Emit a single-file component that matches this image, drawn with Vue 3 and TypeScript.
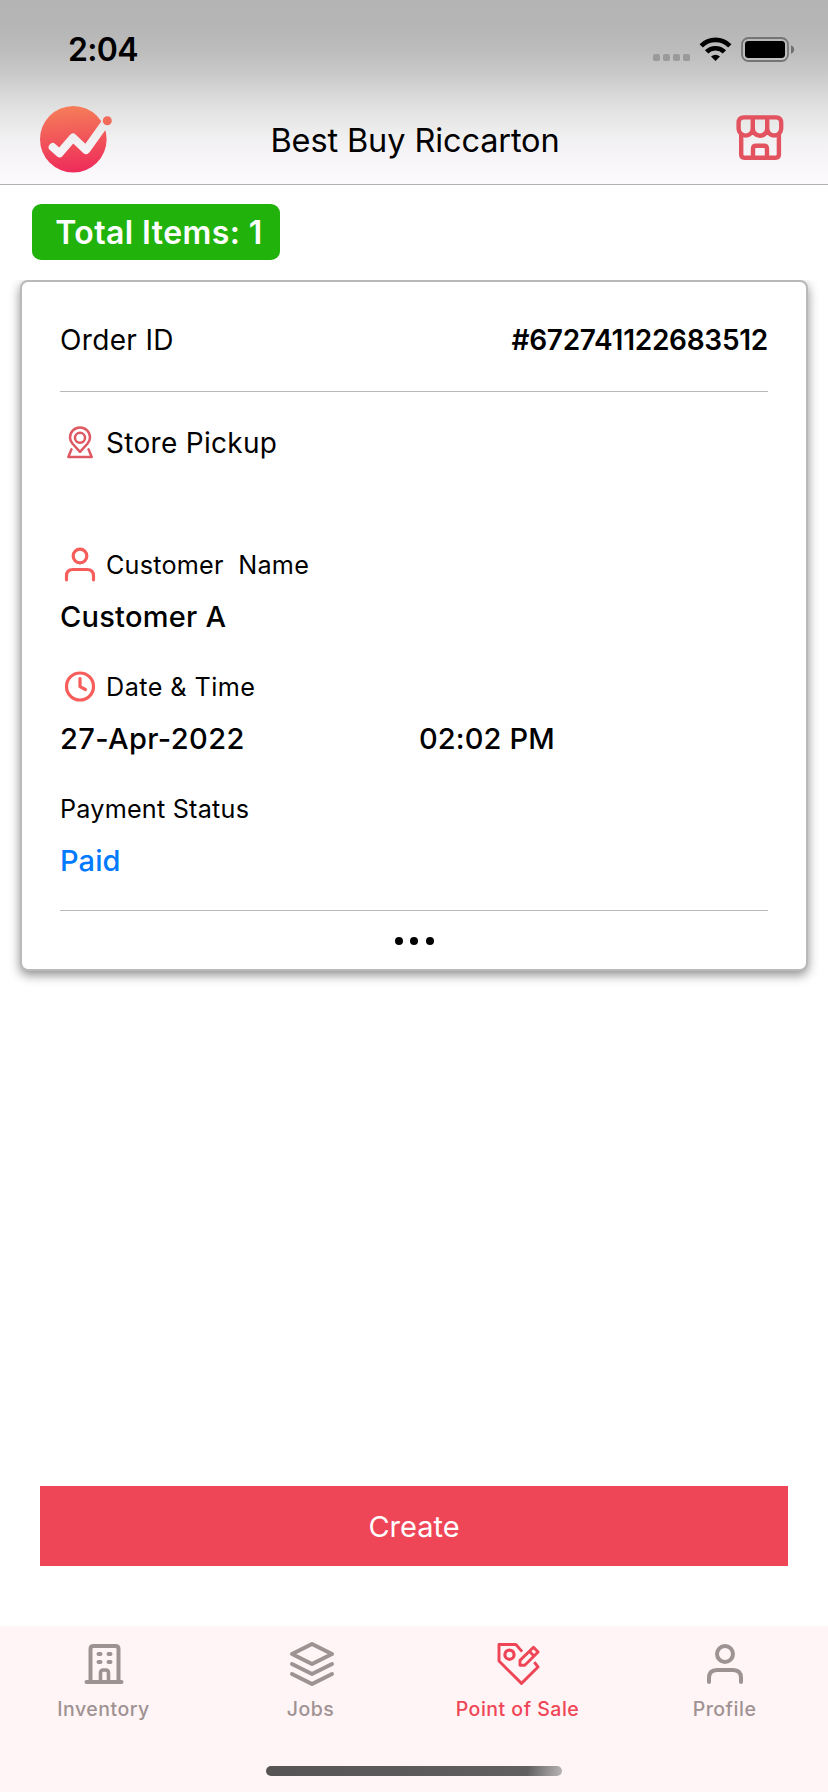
<script setup lang="ts">
interface Tab {
  key: 'inventory' | 'jobs' | 'pos' | 'profile'
  label: string
  active: boolean
}

const order = {
  id: '#672741122683512',
  method: 'Store Pickup',
  customer: 'Customer A',
  date: '27-Apr-2022',
  time: '02:02 PM',
  status: 'Paid',
}

const tabs: Tab[] = [
  { key: 'inventory', label: 'Inventory', active: false },
  { key: 'jobs', label: 'Jobs', active: false },
  { key: 'pos', label: 'Point of Sale', active: true },
  { key: 'profile', label: 'Profile', active: false },
]
</script>

<template>
  <div class="screen">
    <header class="header">
      <div class="status">
        <span class="clock">2:04</span>
        <svg class="status-icons" width="142" height="26" viewBox="653 36 142 26">
          <g fill="#9a9a9a">
            <rect x="653" y="54" width="7" height="7" rx="1.8" />
            <rect x="663" y="54" width="7" height="7" rx="1.8" />
            <rect x="673" y="54" width="7" height="7" rx="1.8" />
            <rect x="683" y="54" width="7" height="7" rx="1.8" />
          </g>
          <g fill="none" stroke="#000" stroke-width="4.6">
            <path d="M701.2 45.9 A20 20 0 0 1 729.8 45.9" />
            <path d="M706.6 51.9 A12.5 12.5 0 0 1 724.4 51.9" />
          </g>
          <path d="M715.5 61 L711 56.6 Q715.5 52.8 720 56.6 Z" />
          <rect x="742" y="38" width="46" height="23" rx="6.5" fill="none" stroke="#757575" stroke-width="1.8" />
          <rect x="745" y="41" width="40" height="17" rx="3.4" />
          <path d="M791 45.2 Q794.2 46.6 794.2 49.5 Q794.2 52.4 791 53.8 Z" fill="#707070" />
        </svg>
      </div>
      <div class="titlebar">
        <svg class="logo" width="74" height="70" viewBox="39 105 74 70">
          <defs>
            <linearGradient id="brand" gradientUnits="userSpaceOnUse" x1="70" y1="106" x2="75" y2="173">
              <stop offset="0" stop-color="#f57e59" />
              <stop offset="1" stop-color="#ee2a5a" />
            </linearGradient>
            <mask id="trend" maskUnits="userSpaceOnUse" x="39" y="105" width="74" height="70">
              <rect x="39" y="105" width="74" height="70" fill="#fff" />
              <path d="M52.8 147.2 L59.6 153.2 L73 137.6 L86 150 L106 122" fill="none" stroke="#000" stroke-width="8.2" stroke-linecap="round" stroke-linejoin="round" />
            </mask>
          </defs>
          <circle cx="73.3" cy="139.3" r="33.3" fill="url(#brand)" mask="url(#trend)" />
          <circle cx="107.3" cy="120.8" r="4.5" fill="#f26a58" />
        </svg>
        <h1 class="title">Best Buy Riccarton</h1>
        <svg class="store" width="50" height="48" viewBox="735 114 50 48" fill="none" stroke="#e2535f" stroke-width="4.4" stroke-linejoin="round">
          <path d="M738.6 128.500 V123 Q738.600 117.400 744 117.400 H776 Q781.200 117.400 781.200 123 V128.500 A7 7 0 0 1 767.200 128.500 V117.400 M767.200 128.500 A7.200 7.200 0 0 1 752.800 128.500 V117.400 M752.800 128.500 A7.100 7.100 0 0 1 738.600 128.500" />
          <path d="M741.200 134 V154.500 Q741.200 157.700 744.400 157.700 H775.600 Q778.900 157.700 778.900 154.500 V134" />
          <path d="M753 157.500 V149 Q753 145.800 756 145.800 H764 Q767 145.800 767 149 V157.500" />
        </svg>
      </div>
    </header>

    <div class="summary">
      <span class="badge">Total Items: 1</span>
    </div>

    <main class="orders">
      <article class="card">
        <div class="order-row">
          <span class="order-label">Order ID</span>
          <span class="order-id">{{ order.id }}</span>
        </div>

        <div class="method">
          <svg class="icon" width="40" height="40" viewBox="60 422.500 40 40" fill="none" stroke="#df5963" stroke-width="2.500" stroke-linejoin="round" stroke-linecap="round">
            <path d="M80 451.400 L72.400 443 Q70 440 70 437 A10 10 0 0 1 90 437 Q90 440 87.600 443 Z" />
            <circle cx="80" cy="437.300" r="5" />
            <path d="M71.500 448.800 L68.300 456.400 H91.700 L88.500 448.800" />
          </svg>
          <span class="method-label">{{ order.method }}</span>
        </div>

        <section class="field">
          <div class="label-row">
            <svg class="icon" width="40" height="40" viewBox="60 545 40 40" fill="none" stroke="#f65d5b" stroke-width="3.200" stroke-linecap="round">
              <circle cx="80" cy="556" r="6.800" />
              <path d="M66.500 579.800 V576 Q66.500 569.500 73 569.500 H87 Q93.500 569.500 93.500 576 V579.800" />
            </svg>
            <span class="label">Customer&nbsp; Name</span>
          </div>
          <div class="value customer">{{ order.customer }}</div>
        </section>

        <section class="field">
          <div class="label-row">
            <svg class="icon" width="40" height="40" viewBox="60 667 40 40" fill="none" stroke="#f65d5b" stroke-width="3.200" stroke-linecap="round" stroke-linejoin="round">
              <circle cx="80" cy="686.500" r="13.500" />
              <path d="M80 678.500 V686.700 L85.400 689.500" />
            </svg>
            <span class="label date-label">Date &amp; Time</span>
          </div>
          <div class="value split">
            <span class="date">{{ order.date }}</span>
            <span class="time">{{ order.time }}</span>
          </div>
        </section>

        <section class="field">
          <div class="label-row"><span class="label">Payment Status</span></div>
          <div class="value paid">{{ order.status }}</div>
        </section>

        <div class="more">
          <i></i><i></i><i></i>
        </div>
      </article>
    </main>

    <button class="create" type="button">Create</button>

    <nav class="tabs">
      <div v-for="tab in tabs" :key="tab.key" class="tab" :class="[tab.key, { active: tab.active }]">
        <svg v-if="tab.key === 'inventory'" class="tab-icon" width="48" height="48" viewBox="79.500 1640 48 48" fill="none" stroke="currentColor" stroke-width="4" stroke-linecap="round" stroke-linejoin="round">
          <path d="M86 1682 H121 M90 1681 V1649 Q90 1646 93 1646 H115 Q118 1646 118 1649 V1681" />
          <path d="M98 1654 H100 M108 1654 H110 M98 1662 H100 M108 1662 H110" />
          <path d="M100 1681 V1673 Q100 1670 103 1670 H105 Q108 1670 108 1673 V1681" stroke-width="3.600" />
        </svg>
        <svg v-else-if="tab.key === 'jobs'" class="tab-icon" width="48" height="48" viewBox="287 1640 48 48" fill="none" stroke="currentColor" stroke-width="4" stroke-linecap="round" stroke-linejoin="round">
          <path d="M312 1644 L332 1654 L312 1664 L292 1654 Z" />
          <path d="M292 1664 L312 1674 L332 1664" />
          <path d="M292 1674 L312 1684 L332 1674" />
        </svg>
        <svg v-else-if="tab.key === 'pos'" class="tab-icon" width="48" height="48" viewBox="493.500 1640 48 48" fill="none" stroke="currentColor" stroke-width="2.900" stroke-linejoin="round">
          <path d="M521.600 1651.600 L515.400 1644.500 H498.500 V1661 L521 1683.400 L537.500 1667 L533.800 1662.200" />
          <circle cx="509" cy="1654.700" r="4.600" stroke-width="3.200" />
          <path d="M519.500 1665.300 V1660.400 L533 1647.300 L537.600 1652 L524.300 1665.300 Z M528.800 1651.300 L533.600 1656" />
        </svg>
        <svg v-else class="tab-icon" width="48" height="48" viewBox="700 1640 48 48" fill="none" stroke="currentColor" stroke-width="4" stroke-linecap="round">
          <circle cx="724" cy="1654" r="8" />
          <path d="M708 1682 V1678 Q708 1670 716 1670 H732 Q740 1670 740 1678 V1682" />
        </svg>
        <span class="tab-label">{{ tab.label }}</span>
      </div>
      <div class="home"></div>
    </nav>
  </div>
</template>

<style>
html,
body {
  margin: 0;
  background: #fff;
}
</style>

<style scoped>
.screen {
  box-sizing: border-box;
  display: flex;
  flex-direction: column;
  width: 828px;
  height: 1792px;
  overflow: hidden;
  background: #fff;
  color: #000;
  font-family: Inter, "Liberation Sans", sans-serif;
  white-space: nowrap;
}

.screen svg {
  display: block;
  flex: none;
}

.header {
  box-sizing: border-box;
  height: 185px;
  border-bottom: 1px solid #b2b2b4;
  background: linear-gradient(#b3b3b3 0, #b6b6b6 28px, #bcbcbc 50px, #cacaca 75px, #d9d9d9 95px, #e6e5e6 115px, #f0eff0 135px, #f7f5f8 160px, #fcfafd 184px);
}

.status {
  display: flex;
  justify-content: space-between;
  padding: 36px 33px 0 68px;
  height: 26px;
}

.clock {
  font-size: 32px;
  font-weight: 600;
  line-height: 28px;
  letter-spacing: -0.7px;
}

.titlebar {
  display: grid;
  grid-template-columns: 74px 1fr 50px;
  align-items: center;
  height: 70px;
  margin-top: 43px;
  padding: 0 43px 0 39px;
}

.title {
  margin: 0;
  padding: 2px 18px 0 0;
  font-size: 32.5px;
  font-weight: 400;
  line-height: 68px;
  letter-spacing: -0.12px;
  text-align: center;
}

.store {
  margin-top: -4px;
}

.summary {
  display: flex;
  height: 56px;
  padding: 19px 32px 20px;
}

.badge {
  box-sizing: border-box;
  width: 248px;
  padding-left: 6px;
  border-radius: 9px;
  background: #21b30c;
  color: #fff;
  font-size: 32px;
  font-weight: 600;
  letter-spacing: 0.4px;
  line-height: 57px;
  text-align: center;
}

.orders {
  flex: none;
  height: 740px;
  padding: 0 20px;
  overflow: hidden;
}

.card {
  box-sizing: border-box;
  height: 691px;
  padding: 0 38px;
  border: 2px solid #b9b9b9;
  border-radius: 8px;
  background: #fff;
  box-shadow: 0 4px 11px rgba(0, 0, 0, 0.45);
}

.order-row {
  box-sizing: border-box;
  display: flex;
  align-items: center;
  justify-content: space-between;
  height: 110px;
  padding-top: 7px;
  border-bottom: 1px solid #b9b9b9;
}

.order-label {
  font-size: 28px;
  letter-spacing: 0.35px;
}

.order-id {
  font-size: 28px;
  font-weight: 600;
  letter-spacing: -0.27px;
}

.method {
  display: flex;
  align-items: center;
  gap: 6px;
  height: 101px;
  margin-bottom: 46px;
}

.method-label {
  font-size: 28px;
  letter-spacing: 0.3px;
}

.field {
  margin-bottom: 18px;
}

.label-row {
  display: flex;
  align-items: center;
  gap: 6px;
  height: 52px;
}

.label {
  font-size: 25.2px;
  letter-spacing: 0.22px;
}

.date-label {
  letter-spacing: 0.45px;
}

.value {
  height: 52px;
  font-size: 29px;
  font-weight: 500;
  line-height: 52px;
  letter-spacing: 0.12px;
}

.split {
  display: grid;
  grid-template-columns: 359px 1fr;
}

.date {
  letter-spacing: 0.4px;
}

.customer {
  letter-spacing: 0.25px;
}

.paid {
  color: #007aff;
}

.more {
  box-sizing: border-box;
  display: flex;
  align-items: center;
  justify-content: center;
  gap: 7.5px;
  height: 60px;
  margin-top: 23px;
  border-top: 1px solid #b9b9b9;
}

.more i {
  width: 8px;
  height: 8px;
  border-radius: 50%;
  background: #000;
}

.create {
  flex: none;
  height: 80px;
  margin: 466px 40px 0;
  padding: 0;
  border: 0;
  background: #ef4657;
  color: #fff;
  font: 400 29px/81px Inter, "Liberation Sans", sans-serif;
}

.tabs {
  position: relative;
  display: flex;
  flex: none;
  height: 166px;
  margin-top: 60px;
  background: #fff5f6;
}

.tab {
  display: flex;
  flex: 1;
  flex-direction: column;
  align-items: center;
  padding-top: 14px;
  color: #9f9293;
}

.tab.active {
  color: #ef4657;
}

.tab-label {
  margin-top: 8px;
  font-size: 19.5px;
  font-weight: 500;
  letter-spacing: 0.5px;
  line-height: 26px;
}

.home {
  position: absolute;
  left: 266px;
  bottom: 16px;
  width: 296px;
  height: 10px;
  border-radius: 5px;
  background: linear-gradient(100deg, #565454 0%, #625f60 88%, #8d8a8b 94%, #b9b4b5 100%);
}
</style>
